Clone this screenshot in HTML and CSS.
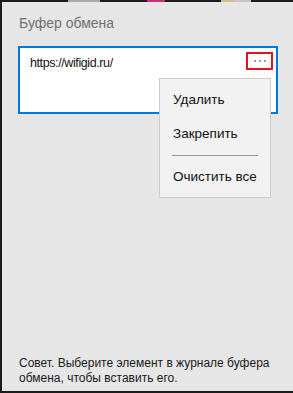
FILE: index.html
```html
<!DOCTYPE html>
<html lang="ru">
<head>
<meta charset="utf-8">
<title>Буфер обмена</title>
<link rel="stylesheet" href="styles.css">
</head>
<body>
<div class="topstrip">
  <span class="seg s1"></span><span class="seg s2"></span><span class="seg s3"></span><span class="seg s4"></span><span class="seg s5"></span><span class="seg s6"></span><span class="seg s7"></span><span class="seg s8"></span>
</div>
<div class="panel">
  <div class="title">Буфер обмена</div>
  <div class="card">
    <div class="url">https://wifigid.ru/</div>
    <div class="more"><i></i><i></i><i></i></div>
  </div>
  <div class="tip">Совет. Выберите элемент в журнале буфера обмена, чтобы вставить его.</div>
  <div class="menu">
    <div class="item">Удалить</div>
    <div class="item">Закрепить</div>
    <div class="sep"></div>
    <div class="item">Очистить все</div>
  </div>
</div>
</body>
</html>
```
FILE: styles.css
```css
* { box-sizing: border-box; }
html, body { margin: 0; padding: 0; }
body {
  width: 293px;
  height: 393px;
  background: #e6e6e6;
  font-family: "Liberation Sans", Arial, sans-serif;
  color: #000;
  display: flex;
  flex-direction: column;
  overflow: hidden;
}
.topstrip { display: flex; height: 2px; flex: none; }
.seg { display: block; height: 2px; }
.s1 { width: 68px; background: #1c1c1c; }
.s2 { width: 32px; background: #a8a8a8; }
.s3 { width: 47px; background: #1c1c1c; }
.s4 { width: 18px; background: #c2307c; }
.s5 { width: 56px; background: #1c1c1c; }
.s6 { width: 13px; background: #d6bf8c; }
.s7 { width: 17px; background: #c6c6c6; }
.s8 { flex: 1; background: #1c1c1c; }
.panel {
  position: relative;
  flex: 1;
  display: flex;
  flex-direction: column;
  border-left: 2px solid #1c1c1c;
  border-bottom: 2px solid #1c1c1c;
  padding: 0 15px 0 16px;
}
.title {
  margin-top: 11px;
  padding-left: 1px;
  font-size: 14px;
  line-height: 20px;
  color: #707070;
}
.card {
  margin-top: 13px;
  height: 68px;
  border: 2px solid #0078d7;
  background: #fff;
  display: flex;
  align-items: flex-start;
  justify-content: space-between;
  padding: 4px 3px 0 10px;
}
.url {
  margin-top: 2px;
  font-size: 12.5px;
  letter-spacing: -0.4px;
  line-height: 18px;
  color: #111;
}
.more {
  width: 27px;
  height: 18px;
  border: 2px solid #e0141e;
  display: flex;
  align-items: center;
  justify-content: center;
  gap: 3px;
}
.more i {
  display: block;
  width: 2px;
  height: 2px;
  background: #9a9a9a;
}
.tip {
  margin-top: auto;
  margin-left: 1px;
  padding-bottom: 5px;
  font-size: 12px;
  line-height: 15px;
  color: #1a1a1a;
}
.menu {
  position: absolute;
  left: 157px;
  top: 76px;
  width: 112px;
  height: 120px;
  background: #f2f2f2;
  border: 1px solid #cccccc;
  padding-top: 4px;
}
.item {
  padding-left: 13px;
  font-size: 13.5px;
  line-height: 34px;
  color: #111;
}
.sep {
  margin: 4px 12px;
  height: 1px;
  background: #999;
}
```
